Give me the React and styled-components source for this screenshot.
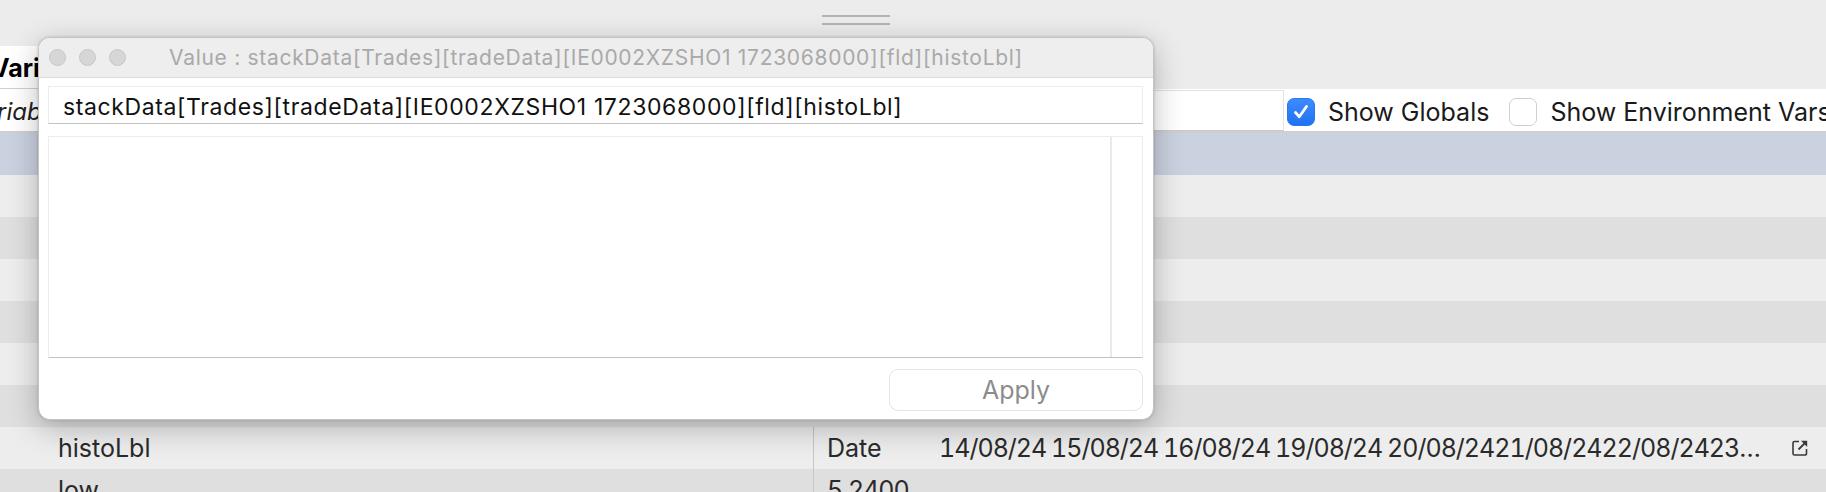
import React from "react";
import styled, { createGlobalStyle } from "styled-components";

const Global = createGlobalStyle`
  html, body { margin: 0; padding: 0; background: #ececec; overflow: hidden; }
  body { font-family: Inter, "Noto Sans", "Liberation Sans", sans-serif; }
`;

const Screen = styled.div`
  position: relative;
  width: 1826px;
  height: 492px;
  overflow: hidden;
  background: #ececec;
  display: flex;
  flex-direction: column;
`;

const TopStrip = styled.div`
  height: 46px;
  flex: none;
  display: flex;
  align-items: flex-start;
  padding-left: 822px;
  padding-top: 15px;
  box-sizing: border-box;
`;

const Handle = styled.div`
  width: 68px;
  height: 10px;
  border-top: 2px solid #b4b4b4;
  border-bottom: 2px solid #b4b4b4;
  box-sizing: border-box;
`;

const HeaderStrip = styled.div`
  height: 43px;
  flex: none;
  display: flex;
`;

const HeaderCell = styled.div`
  width: 800px;
  background: #fff;
  border-bottom: 1px solid #d0d0d0;
  box-sizing: border-box;
  display: flex;
  align-items: center;
  padding-top: 2px;
  font-weight: 700;
  font-size: 25px;
  color: #000;
  text-indent: -9px;
  overflow: hidden;
`;

const Toolbar = styled.div`
  height: 44px;
  flex: none;
  background: #fff;
  border-bottom: 2px solid #cfcfcf;
  box-sizing: border-box;
  display: flex;
  align-items: center;
  padding-top: 3px;
  overflow: hidden;
  white-space: nowrap;
`;

const FilterHint = styled.div`
  width: 700px;
  flex: none;
  font-style: italic;
  font-size: 24px;
  color: #222;
  text-indent: -33px;
  overflow: hidden;
  white-space: nowrap;
`;

const SearchBox = styled.div`
  width: 584px;
  flex: none;
  height: 41px;
  margin-top: -3px;
  box-sizing: border-box;
  border: 1px solid #e2e2e2;
  border-bottom-color: #c9c9c9;
  background: #fff;
  margin-right: 3px;
`;

const CheckLabel = styled.label`
  display: flex;
  flex: none;
  align-items: center;
  gap: 13px;
  font-size: 25px;
  color: #1a1a1a;
  margin-right: 20px;
  white-space: nowrap;
`;

const Box = styled.span`
  width: 28px;
  height: 28px;
  box-sizing: border-box;
  border-radius: 7px;
  display: flex;
  align-items: center;
  justify-content: center;
  background: ${(p) => (p.$on ? "linear-gradient(#3d8bff, #1f72f2)" : "#fff")};
  border: 1px solid ${(p) => (p.$on ? "#2a78ee" : "#cfcfcf")};
  flex: none;
`;

const Rows = styled.div`
  display: flex;
  flex-direction: column;
`;

const Row = styled.div`
  height: 42px;
  flex: none;
  display: flex;
  background: ${(p) => (p.$sel ? "#cad1df" : p.$odd ? "#ededed" : "#dfdfdf")};
  color: #2a2a2a;
  font-size: 25px;
`;

const NameCell = styled.div`
  width: 814px;
  flex: none;
  box-sizing: border-box;
  padding-left: 58px;
  display: flex;
  align-items: center;
  border-right: ${(p) => (p.$line ? "1px solid #c6c6c6" : "1px solid transparent")};
`;

const ValueCell = styled.div`
  flex: 1;
  min-width: 0;
  display: flex;
  align-items: center;
  padding-left: 13px;
  padding-right: 17px;
`;

const TypeLabel = styled.span`
  width: 112px;
  flex: none;
`;

const ValueText = styled.span`
  flex: 1;
  min-width: 0;
  overflow: hidden;
  white-space: nowrap;
  text-overflow: ellipsis;
  font-feature-settings: "tnum" 1;
  font-variant-numeric: tabular-nums;
  letter-spacing: -1px;
  word-spacing: -1px;
  margin-right: 27px;
`;

const Dialog = styled.div`
  position: absolute;
  left: 38px;
  top: 37px;
  width: 1116px;
  height: 383px;
  box-sizing: border-box;
  background: #fff;
  border: 1px solid #c4c4c4;
  border-radius: 12px;
  box-shadow: 0 8px 30px rgba(0, 0, 0, 0.26), 0 0 3px rgba(0, 0, 0, 0.18);
  display: flex;
  flex-direction: column;
  overflow: hidden;
`;

const TitleBar = styled.div`
  height: 40px;
  flex: none;
  background: #eeeeee;
  border-bottom: 1px solid #dcdcdc;
  box-sizing: border-box;
  display: flex;
  align-items: center;
  position: relative;
`;

const Lights = styled.div`
  display: flex;
  gap: 13px;
  padding-left: 10px;
`;

const Light = styled.span`
  width: 17px;
  height: 17px;
  border-radius: 50%;
  background: #d6d6d6;
  border: 1px solid #c6c6c6;
  box-sizing: border-box;
`;

const Title = styled.div`
  position: absolute;
  left: 0;
  right: 0;
  text-align: center;
  font-size: 21px;
  letter-spacing: 0.7px;
  color: #a9a9a9;
  white-space: nowrap;
  pointer-events: none;
`;

const Body = styled.div`
  flex: 1;
  display: flex;
  flex-direction: column;
  padding: 8px 10px 8px 9px;
`;

const PathField = styled.div`
  height: 38px;
  box-sizing: border-box;
  border: 1px solid #ececec;
  border-bottom: 1px solid #c2c2c2;
  display: flex;
  align-items: center;
  padding-left: 14px;
  padding-top: 4px;
  font-size: 23px;
  letter-spacing: 0.62px;
  color: #111;
  white-space: nowrap;
`;

const Editor = styled.div`
  margin-top: 12px;
  height: 222px;
  box-sizing: border-box;
  border: 1px solid #ececec;
  border-bottom: 1px solid #c2c2c2;
  display: flex;
  justify-content: flex-end;
`;

const ScrollTrack = styled.div`
  width: 30px;
  border-left: 2px solid #e9e9e9;
  background: #fff;
`;

const Footer = styled.div`
  display: flex;
  justify-content: flex-end;
  margin-top: 11px;
`;

const ApplyButton = styled.button`
  width: 254px;
  height: 42px;
  box-sizing: border-box;
  border: 1px solid #e4e4e4;
  border-radius: 9px;
  background: #fff;
  font-family: inherit;
  font-size: 25px;
  color: #8c8c8c;
  padding: 0;
`;

const LinkIcon = () => (
  <svg width="18" height="18" viewBox="0 0 18 18" fill="none">
    <path d="M8 2.5H3.5a1.5 1.5 0 0 0-1.5 1.5v10.5a1.5 1.5 0 0 0 1.5 1.5H14a1.5 1.5 0 0 0 1.5-1.5V10" stroke="#3a3a3a" strokeWidth="1.6" />
    <path d="M7.5 10.5L14 4" stroke="#3a3a3a" strokeWidth="1.8" />
    <path d="M10 1.8h6.2V8z" fill="#3a3a3a" />
  </svg>
);

const Check = () => (
  <svg width="18" height="18" viewBox="0 0 18 18" fill="none">
    <path d="M3.5 9.5l3.8 4.2L14.5 3.5" stroke="#fff" strokeWidth="2.8" strokeLinecap="round" strokeLinejoin="round" />
  </svg>
);

const rows = [
  { sel: true },
  {}, {}, {}, {}, {}, {},
  { name: "histoLbl", type: "Date", value: "14/08/24 15/08/24 16/08/24 19/08/24 20/08/2421/08/2422/08/2423/08/2426/08/24", link: true },
  { name: "low", value: "5.2400" },
];

export default function App() {
  const path = "stackData[Trades][tradeData][IE0002XZSHO1 1723068000][fld][histoLbl]";
  return (
    <>
      <Global />
      <Screen>
        <TopStrip>
          <Handle />
        </TopStrip>
        <HeaderStrip>
          <HeaderCell>Variable</HeaderCell>
        </HeaderStrip>
        <Toolbar>
          <FilterHint>Variable name</FilterHint>
          <SearchBox />
          <CheckLabel>
            <Box $on>
              <Check />
            </Box>
            Show Globals
          </CheckLabel>
          <CheckLabel>
            <Box />
            Show Environment Vars
          </CheckLabel>
        </Toolbar>
        <Rows>
          {rows.map((r, i) => (
            <Row key={i} $sel={r.sel} $odd={i % 2 === 1}>
              <NameCell $line={!!r.name}>{r.name}</NameCell>
              <ValueCell>
                {r.type ? <TypeLabel>{r.type}</TypeLabel> : null}
                <ValueText>{r.value}</ValueText>
                {r.link ? <LinkIcon /> : null}
              </ValueCell>
            </Row>
          ))}
        </Rows>
        <Dialog>
          <TitleBar>
            <Lights>
              <Light />
              <Light />
              <Light />
            </Lights>
            <Title>Value : {path}</Title>
          </TitleBar>
          <Body>
            <PathField>{path}</PathField>
            <Editor>
              <ScrollTrack />
            </Editor>
            <Footer>
              <ApplyButton>Apply</ApplyButton>
            </Footer>
          </Body>
        </Dialog>
      </Screen>
    </>
  );
}
